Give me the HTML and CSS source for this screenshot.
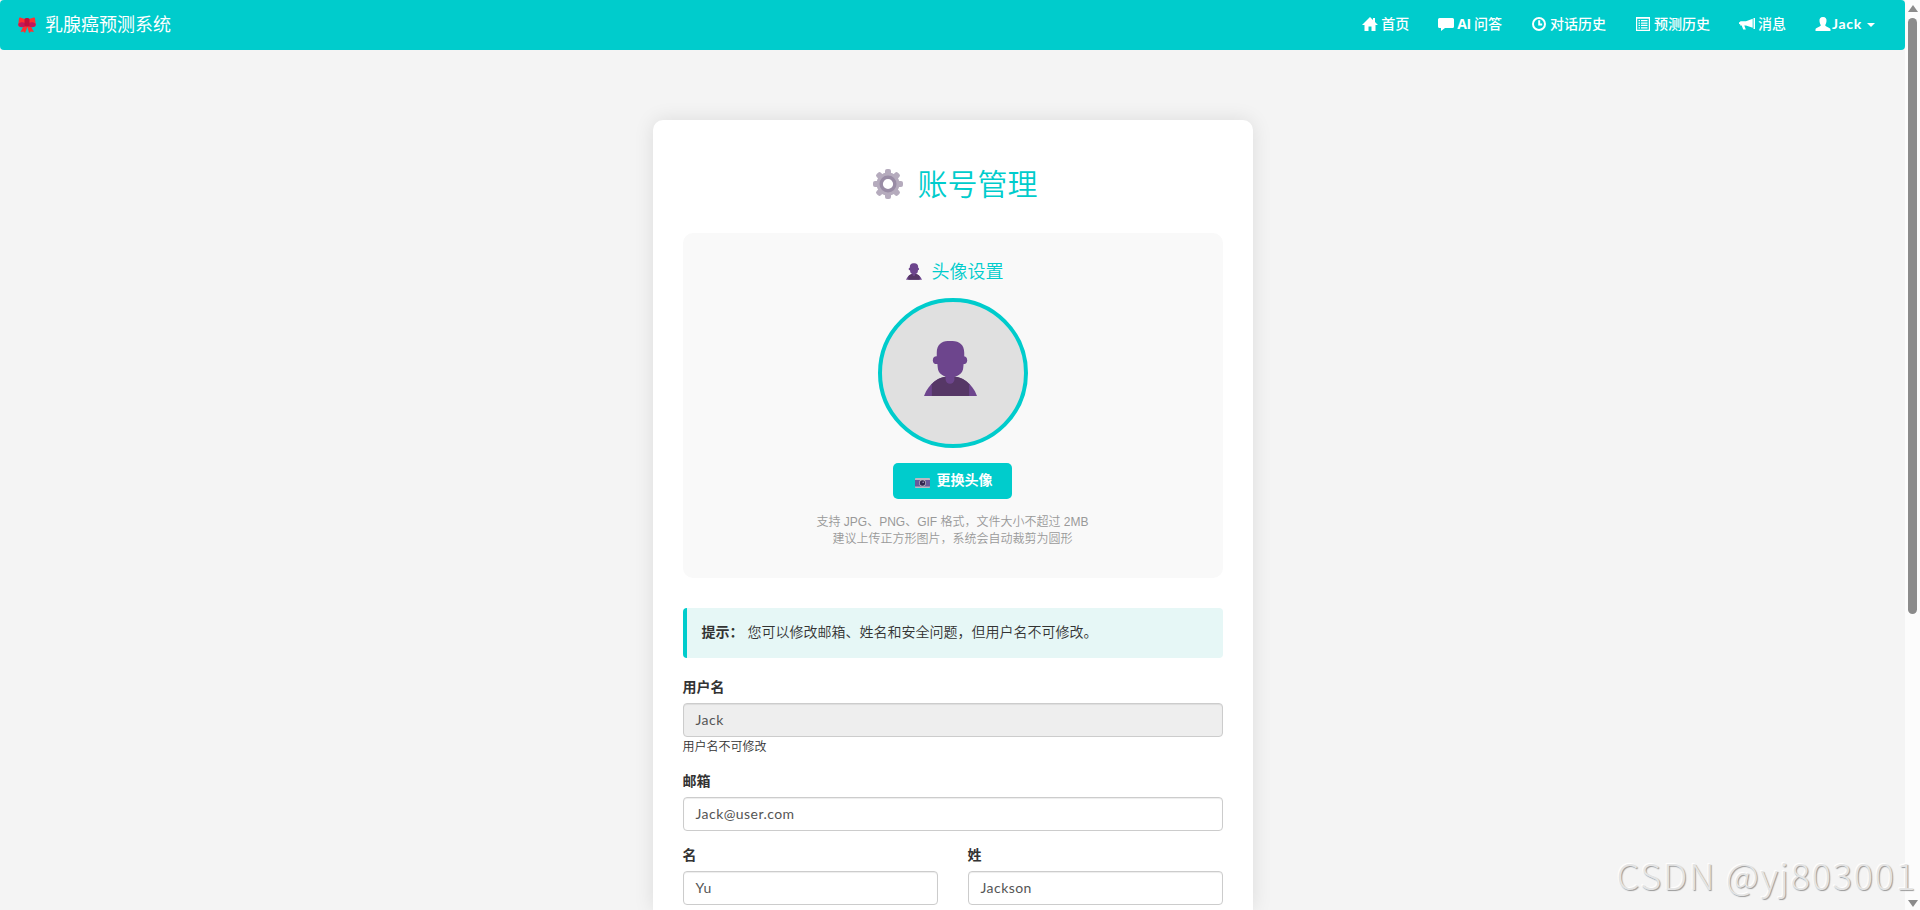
FILE: index.html
```html
<!DOCTYPE html>
<html lang="zh-CN">
<head>
<meta charset="utf-8">
<title>账号管理</title>
<link rel="stylesheet" href="styles.css">
</head>
<body>
<svg class="defs" aria-hidden="true">
  <symbol id="person" viewBox="0 0 54 56">
    <path fill="#6d458d" d="M0 56C5 43 15 36 27 36S49 43 54 56Z"/>
    <path fill="#563766" d="M8 44C13 38 20 36 27 36S41 38 46 44V56H8Z"/>
    <path fill="#6d458d" d="M22 34h9v5a4.500 4.500 0 0 1-9 0z"/>
    <circle cx="13" cy="19.500" r="4" fill="#6d458d"/><circle cx="40" cy="19.500" r="4" fill="#6d458d"/>
    <path fill="#6d458d" d="M13 12C13 4 18 0 24 0h5c7 0 12 4 12 12v5l-1 10c0 6-6 10-13 10S14 33 14 27l-1-10z"/>
  </symbol>
</svg>
<nav class="navbar">
  <a class="brand">
    <svg class="bow" viewBox="0 0 18 16"><path fill="#ff3030" d="M6 8 2.500 15l3-.5L7 16l2.500-6L11 16l2-1.500 3 .5L12 8z"/><path fill="#ff3030" d="M1 1.500C1 .5 2 .3 3 .8L7 2v7l-4 .8C1 10 0 9 .3 7.500zM17 1.500C17 .5 16 .3 15 .8L11 2v7l4 .8c2 .2 3-.8 2.700-2.300z"/><path fill="#c2185b" d="M.2 7C2 5 5 5 7 6v3.500C4 11 .5 10.500.2 7zM17.800 7C16 5 13 5 11 6v3.500c3 1.500 6.500 1 6.800-2.500z"/><rect x="6.500" y="1" width="5" height="8.500" rx="1.500" fill="#c2103c"/></svg>
    <span>乳腺癌预测系统</span>
  </a>
  <div class="links">
    <a class="link"><svg class="icon" viewBox="0 0 16 14"><path d="M8 0 0 8h2.500v6h4V9.500h3V14h4V8H16l-3-3V1h-2v2z"/></svg><span>首页</span></a>
    <a class="link"><svg class="icon" viewBox="0 0 16 14"><path d="M1.500 1h13q1.500 0 1.500 1.500v7q0 1.500-1.500 1.500H7l-4 3v-3H1.500Q0 11 0 9.500v-7Q0 1 1.500 1z"/></svg><span><b class="ai">AI</b> 问答</span></a>
    <a class="link"><svg class="icon round" viewBox="0 0 14 14"><path class="line" d="M7 1a6 6 0 1 1 0 12A6 6 0 0 1 7 1zM7.200 3.200v4.200h3"/></svg><span>对话历史</span></a>
    <a class="link"><svg class="icon round" viewBox="0 0 14 14"><path fill-rule="evenodd" d="M0 0h14v14H0zM1.200 1.800v11h11.600v-11z"/><path d="M2.500 3h1.500v1.300H2.500zM5 3h6.500v1.300H5zM2.500 5.400h1.500v1.300H2.500zM5 5.400h6.500v1.300H5zM2.500 7.800h1.500v1.300H2.500zM5 7.800h6.500v1.300H5zM2.500 10.200h1.500v1.300H2.500zM5 10.200h6.500v1.300H5z"/></svg><span>预测历史</span></a>
    <a class="link"><svg class="icon" viewBox="0 0 16 14"><path d="M14.500 1H16v11h-1.500zM13.700 1.800v9L7 8.500H5.300l1.500 4H4.200L2.700 8.500H1.200V7.200L0 7V5.200l1.200-.2V4.200H7z"/></svg><span>消息</span></a>
    <a class="link user"><svg class="icon" viewBox="0 0 16 14"><path d="M8 0c2.700 0 3.800 1.700 3.500 4.200-.2 2-1 3-1.300 4 0 1.600 5.300 2.200 5.300 4.300V14H.5v-1.500c0-2.100 5.300-2.700 5.300-4.300-.3-1-1.100-2-1.300-4C4.200 1.700 5.300 0 8 0z"/></svg><span class="latin">Jack</span><i class="caret"></i></a>
  </div>
</nav>
<main class="card">
  <h1 class="title">
    <svg class="gear" viewBox="0 0 30 30"><g fill="#b5abbd"><circle cx="15" cy="15" r="11.500"/><rect x="12" width="6" height="30" rx="2"/><rect x="12" width="6" height="30" rx="2" transform="rotate(45 15 15)"/><rect x="12" width="6" height="30" rx="2" transform="rotate(90 15 15)"/><rect x="12" width="6" height="30" rx="2" transform="rotate(135 15 15)"/></g><circle cx="15" cy="15" r="6.800" fill="#fff" stroke="#998ca5" stroke-width="3.400"/></svg>
    <span>账号管理</span>
  </h1>
  <section class="avatar-section">
    <h4 class="subtitle"><svg class="mini-person" preserveAspectRatio="none"><use href="#person"/></svg><span>头像设置</span></h4>
    <div class="avatar"><svg><use href="#person"/></svg></div>
    <button class="change"><svg class="camera" viewBox="0 0 15 10"><rect width="15" height="10" rx=".8" fill="#bdb8c2"/><rect y="2" width="15" height="6.500" fill="#675a9b"/><circle cx="7.500" cy="5" r="3.400" fill="#bdb8c2"/><circle cx="7.500" cy="5" r="2.700" fill="#32264f"/><circle cx="8.200" cy="4.300" r=".8" fill="#a99ac6"/></svg><span>更换头像</span></button>
    <p class="hint">支持 JPG、PNG、GIF 格式，文件大小不超过 2MB<br>建议上传正方形图片，系统会自动裁剪为圆形</p>
  </section>
  <div class="tip"><strong>提示：</strong> 您可以修改邮箱、姓名和安全问题，但用户名不可修改。</div>
  <form>
    <div class="group"><label>用户名</label><div class="input disabled">Jack</div><small>用户名不可修改</small></div>
    <div class="group"><label>邮箱</label><div class="input">Jack@user.com</div></div>
    <div class="row">
      <div class="group"><label>名</label><div class="input">Yu</div></div>
      <div class="group"><label>姓</label><div class="input">Jackson</div></div>
    </div>
  </form>
</main>
<div class="scrollbar"><i class="up"></i><i class="thumb"></i><i class="down"></i></div>
<div class="watermark">CSDN @yj803001</div>
</body>
</html>
```
FILE: styles.css
```css
* { box-sizing: border-box; }
html, body { height: 100%; }
body {
  margin: 0;
  padding-right: 15px;
  overflow: hidden;
  position: relative;
  display: flex;
  flex-direction: column;
  background: #f4f4f4;
  color: #333;
  font: 14px/20px "AR PL UKai CN", KaiTi, "Noto Sans CJK SC", sans-serif;
}
.defs { position: absolute; width: 0; height: 0; }
.navbar {
  flex: none;
  height: 50px;
  padding: 0 30px 0 18px;
  display: flex;
  justify-content: space-between;
  background: #0cc;
  color: #fff;
  border-radius: 4px;
}
.brand { display: flex; align-items: center; gap: 9px; height: 47px; font-size: 18px; }
.brand span { margin-top: -2px; }
.bow { width: 18px; height: 16px; margin-top: 2px; }
.links { display: flex; gap: 30px; height: 47px; }
.link { display: flex; align-items: center; gap: 3px; font-weight: 500; white-space: nowrap; }
.link span { margin-top: -2px; }
.ai { font: bold 14px "Open Sans", sans-serif; letter-spacing: -.3px; }
.icon { width: 16px; height: 14px; fill: #fff; margin: 0 0 0 -1px; }
.round { width: 14px; margin: 0 1px 0 0; }
.line { fill: none; stroke: #fff; stroke-width: 2; }
.user { gap: 1px; }
.link .latin { margin-top: 0; font: bold 14px Lato, sans-serif; letter-spacing: .7px; }
.caret { margin-left: 4px; margin-top: 2px; border: 4px solid transparent; border-top-color: #fff; border-bottom: 0; }
.card {
  width: 600px;
  flex: 1;
  min-height: 0;
  margin: 70px auto 0;
  padding: 30px 30px 0;
  background: #fff;
  border-radius: 10px 10px 0 0;
  box-shadow: 0 0 20px rgba(0, 0, 0, .1);
}
.title {
  margin: 17px 0 33px;
  height: 33px;
  display: flex;
  justify-content: center;
  align-items: center;
  gap: 15px;
  padding-left: 5px;
  color: #0cc;
  font-size: 30px;
  font-weight: 350;
}
.title span { margin-top: -4px; }
.gear { width: 30px; height: 30px; margin-top: 1px; }
.avatar-section {
  height: 345px;
  padding: 28px 20px 0;
  margin-bottom: 30px;
  display: flex;
  flex-direction: column;
  align-items: center;
  background: #f9f9f9;
  border-radius: 10px;
}
.subtitle { display: flex; align-items: center; gap: 10px; height: 20px; margin: 0 0 17px; padding-left: 4px; color: #0cc; font-size: 18px; font-weight: 350; }
.subtitle span { margin-top: -2px; }
.mini-person { width: 16px; height: 17px; }
.avatar { display: flex; justify-content: center; align-items: flex-start; width: 150px; height: 150px; padding: 39px 4px 0 0; border: 4px solid #0cc; border-radius: 50%; background: #e0e0e0; }
.avatar svg { width: 53px; height: 55px; }
.change {
  width: 119px;
  height: 36px;
  margin: 15px 0;
  padding: 0 0 2px 2px;
  display: flex;
  justify-content: center;
  align-items: center;
  gap: 7px;
  border: 0;
  border-radius: 5px;
  background: #0cc;
  color: #fff;
  font: bold 14px/20px "AR PL UKai CN", KaiTi, "Noto Sans CJK SC", sans-serif;
}
.change span { margin-top: -2px; }
.camera { width: 15px; height: 10px; margin-top: 5px; }
.hint { margin: 0; color: #999; font: 350 12px/17px "Liberation Sans", "AR PL UKai CN", "Noto Sans CJK SC", sans-serif; text-align: center; }
.tip { height: 50px; margin-bottom: 20px; padding: 13px 15px; border-left: 4px solid #0cc; border-radius: 4px; background: #e6f7f6; font-weight: 350; }
.tip strong { font-weight: 700; margin-right: 1px; }
.group { flex: 1; margin-bottom: 15px; }
.group label { display: block; height: 20px; margin-bottom: 5px; font-weight: 700; line-height: 16px; }
.input { height: 34px; padding: 5px 12px; border: 1px solid #ccc; border-radius: 4px; background: #fff; color: #555; font: 14px/22px Lato, "Noto Sans CJK SC", sans-serif; letter-spacing: .45px; box-shadow: inset 0 1px 1px rgba(0, 0, 0, .075); }
.disabled { background: #eee; }
.group small { display: block; height: 20px; font-size: 12px; font-weight: 350; line-height: 18px; }
.row { display: flex; gap: 30px; }
.row .group { margin-bottom: 0; }
.scrollbar { position: absolute; top: 0; right: 0; bottom: 0; width: 15px; display: flex; flex-direction: column; align-items: center; padding: 5px 0 3px; background: #fcfcfc; }
.up, .down { border: 5px solid transparent; }
.up { border-top: 0; border-bottom: 7px solid #8b8b8b; }
.down { border-bottom: 0; border-top: 7px solid #8b8b8b; margin-top: auto; }
.thumb { width: 9px; height: 596px; margin-top: 6px; border-radius: 5px; background: #8b8b8b; }
.watermark { position: absolute; right: 3px; bottom: 14px; color: #e4e4e4; font: 300 36px/44px "Noto Sans CJK SC", sans-serif; letter-spacing: 1.800px; white-space: nowrap; text-shadow: 1px 1px 1px #999, -1px -1px 1px #fff; }
```
